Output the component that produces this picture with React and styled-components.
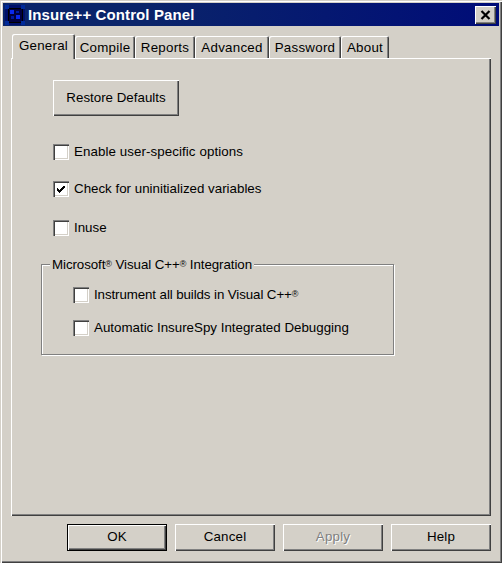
import React from "react";
import styled, { createGlobalStyle } from "styled-components";

const Global = createGlobalStyle`
  html, body { margin: 0; padding: 0; background: #d4d0c8; }
  * { box-sizing: border-box; }
`;

const Win = styled.div`
  width: 502px; height: 563px; background: #d4d0c8; padding: 3px;
  display: flex; flex-direction: column;
  font-family: "Liberation Sans", Arial, sans-serif; font-size: 13.33px; color: #000;
  box-shadow: inset 1px 1px 0 #d4d0c8, inset 2px 2px 0 #fff, inset -1px -1px 0 #404040, inset -2px -2px 0 #808080;
`;
const TitleBar = styled.div`
  height: 23px; flex: none; display: flex; align-items: center; gap: 3px; padding: 0 3px 0 2px;
  background: linear-gradient(90deg, #0a246a 0%, #0a246a 30%, #000c78 100%);
  color: #fff; font-weight: 700; font-size: 15px; letter-spacing: 0.1px;
`;
const TitleText = styled.span` flex: 1; `;
const CloseBtn = styled.div`
  width: 21px; height: 18px; background: #d4d0c8; display: flex; align-items: center; justify-content: center;
  box-shadow: inset 1px 1px 0 #fff, inset -1px -1px 0 #404040, inset -2px -2px 0 #808080;
`;
const Body = styled.div`
  flex: 1; display: flex; flex-direction: column; padding: 8px 8px 9px 8px;
`;
const TabRow = styled.div`
  display: flex; align-items: flex-end; height: 24px; padding-left: 1px; position: relative; z-index: 1; flex: none;
  letter-spacing: 0.25px;
`;
const Tab = styled.div`
  width: ${p => p.$w}px; height: ${p => (p.$active ? 25 : 22)}px;
  margin-bottom: ${p => (p.$active ? -1 : 0)}px;
  background: #d4d0c8;
  border-radius: 2px 2px 0 0;
  display: flex; justify-content: center;
  padding-top: 3px;
  line-height: 17px;
  box-shadow: inset 1px 1px 0 #fff, inset -1px 0 0 #404040, inset -2px 0 0 #808080;
`;
const Panel = styled.div`
  width: 480px; height: 458px; flex: none; padding: 22px 0 0 42px;
  display: flex; flex-direction: column; align-items: flex-start;
  box-shadow: inset 1px 1px 0 #fff, inset -1px -1px 0 #404040, inset -2px -2px 0 #808080;
`;
const Button = styled.div`
  width: ${p => p.$w}px; height: ${p => p.$h}px; flex: none; padding-bottom: 2px;
  display: flex; align-items: center; justify-content: center;
  background: #d4d0c8; color: ${p => (p.$off ? "#808080" : "#000")};
  text-shadow: ${p => (p.$off ? "1px 1px 0 #fff" : "none")};
  box-shadow: ${p => p.$def
    ? "inset 0 0 0 1px #000, inset 2px 2px 0 #fff, inset -2px -2px 0 #404040, inset -3px -3px 0 #808080"
    : "inset 1px 1px 0 #fff, inset -1px -1px 0 #404040, inset -2px -2px 0 #808080"};
`;
const Check = styled.div`
  display: flex; align-items: center; gap: 5px; height: 16px; flex: none; margin-top: ${p => p.$mt}px;
`;
const CheckLabel = styled.span`
  position: relative; top: -1px; letter-spacing: ${p => p.$ls || 0}px;
`;
const Box = styled.div`
  width: 16px; height: 16px; flex: none; background: #fff; display: flex; align-items: center; justify-content: center;
  box-shadow: inset 1px 1px 0 #808080, inset 2px 2px 0 #404040, inset -1px -1px 0 #fff, inset -2px -2px 0 #d4d0c8;
`;
const Group = styled.div`
  position: relative; width: 353px; height: 91px; margin: 28px 0 0 -12px; padding: 22px 0 0 31px;
  border: 1px solid #808080;
  box-shadow: 1px 1px 0 #fff, inset 1px 1px 0 #fff;
`;
const Legend = styled.div`
  position: absolute; left: 8px; top: -8px; padding: 0 2px; background: #d4d0c8; line-height: 16px; white-space: nowrap;
  letter-spacing: -0.08px;
`;
const Sup = styled.span` font-size: 9px; position: relative; top: -2px; `;
const Footer = styled.div`
  display: flex; justify-content: flex-end; gap: 8px; margin-top: 8px; width: 480px; letter-spacing: 0.2px;
`;

function CheckRow({ mt, checked, ls, children }) {
  return (
    <Check $mt={mt}>
      <Box>
        {checked && (
          <svg width="8" height="7" viewBox="0 0 8 7" shapeRendering="crispEdges">
            <path d="M7 0h1v2h-1v1h-1v1h-1v1h-1v1h-1v1h-1v-1h-1v-1h-1v-3h1v1h1v1h1v-1h1v-1h1v-1h1v-1h1z" fill="#000" />
          </svg>
        )}
      </Box>
      <CheckLabel $ls={ls}>{children}</CheckLabel>
    </Check>
  );
}

export default function App() {
  return (
    <Win>
      <Global />
      <TitleBar>
        <svg width="20" height="20" viewBox="0 0 20 20" shapeRendering="crispEdges">
          <rect width="20" height="20" fill="#00106a" />
          <rect x="3" y="3" width="14" height="14" fill="#000040" stroke="#000" />
          <rect x="0" y="0" width="4" height="4" fill="#002a9a" />
          <rect x="16" y="0" width="4" height="4" fill="#002a9a" />
          <rect x="0" y="16" width="4" height="4" fill="#002a9a" />
          <rect x="16" y="16" width="4" height="4" fill="#002a9a" />
          <rect x="5" y="5" width="4" height="4" fill="#0a28f0" />
          <rect x="11" y="6" width="3" height="2" fill="#0018a0" />
          <rect x="11" y="10" width="4" height="4" fill="#0a28f0" />
          <rect x="6" y="11" width="3" height="3" fill="#0018a0" />
        </svg>
        <TitleText>Insure++ Control Panel</TitleText>
        <CloseBtn>
          <svg width="11" height="10" viewBox="0 0 11 10">
            <path d="M1.500 1L9.500 9M9.500 1L1.500 9" stroke="#000" strokeWidth="2.200" />
          </svg>
        </CloseBtn>
      </TitleBar>
      <Body>
        <TabRow>
          <Tab $w={63} $active>General</Tab>
          <Tab $w={60}>Compile</Tab>
          <Tab $w={60}>Reports</Tab>
          <Tab $w={74}>Advanced</Tab>
          <Tab $w={72}>Password</Tab>
          <Tab $w={48}>About</Tab>
        </TabRow>
        <Panel>
          <Button $w={126} $h={36}>Restore Defaults</Button>
          <CheckRow mt={28} ls={0.08}>Enable user-specific options</CheckRow>
          <CheckRow mt={21} checked>Check for uninitialized variables</CheckRow>
          <CheckRow mt={23}>Inuse</CheckRow>
          <Group>
            <Legend>Microsoft<Sup>®</Sup> Visual C++<Sup>®</Sup> Integration</Legend>
            <CheckRow mt={0} ls={-0.1}>Instrument all builds in Visual C++<Sup>®</Sup></CheckRow>
            <CheckRow mt={17}>Automatic InsureSpy Integrated Debugging</CheckRow>
          </Group>
        </Panel>
        <Footer>
          <Button $w={100} $h={27} $def>OK</Button>
          <Button $w={100} $h={27}>Cancel</Button>
          <Button $w={100} $h={27} $off>Apply</Button>
          <Button $w={100} $h={27}>Help</Button>
        </Footer>
      </Body>
    </Win>
  );
}
